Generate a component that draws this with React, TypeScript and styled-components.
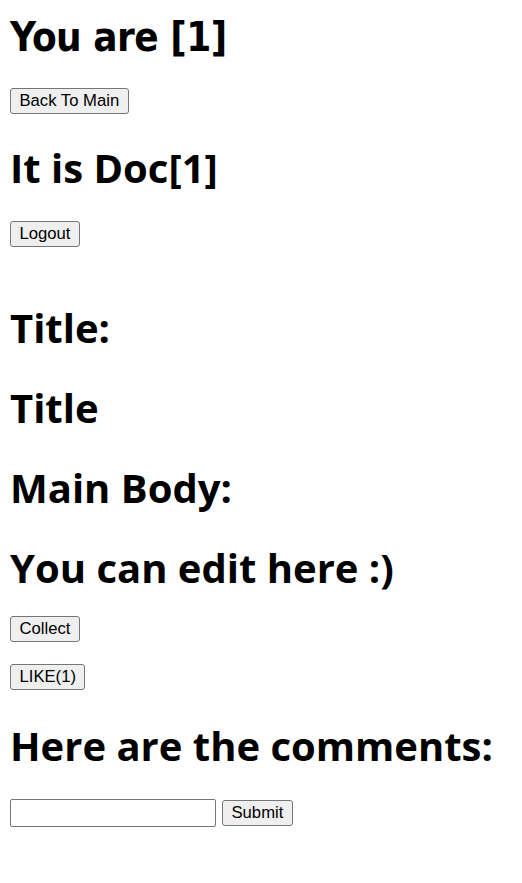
import React from "react";
import styled, { createGlobalStyle } from "styled-components";

const GlobalStyle = createGlobalStyle`
  html, body {
    margin: 0;
    padding: 0;
    background: #ffffff;
  }
  body {
    font-family: "Liberation Sans", Arial, sans-serif;
    color: #000000;
  }
`;

const Page = styled.main`
  display: flex;
  flex-direction: column;
  align-items: flex-start;
  padding: 10px 10px 40px 10px;
`;

const Heading = styled.h1<{ $gap?: number; $alt?: boolean }>`
  margin: ${(p) => p.$gap ?? 27}px 0 0 0;
  font-family: ${(p) =>
    p.$alt ? `"DejaVu Sans Condensed", "DejaVu Sans", sans-serif` : `"Open Sans", "Noto Sans", sans-serif`};
  letter-spacing: ${(p) => (p.$alt ? "-0.5px" : "0")};
  font-weight: 700;
  font-size: 40px;
  line-height: 53px;
  white-space: nowrap;
  color: #000000;
`;

const ButtonRow = styled.div<{ $gap?: number }>`
  display: flex;
  align-items: center;
  gap: 6px;
  margin-top: ${(p) => p.$gap ?? 27}px;
`;

const Button = styled.button`
  box-sizing: border-box;
  height: 26px;
  padding: 1px 8.5px 0 8.5px;
  font-family: "Liberation Sans", Arial, sans-serif;
  font-size: 16.67px;
  line-height: 1;
  color: #000000;
  background: #efefef;
  border: 1px solid #767676;
  border-radius: 3px;
  cursor: default;
`;

const CommentInput = styled.input`
  box-sizing: border-box;
  width: 206px;
  height: 28px;
  padding: 1px 3px;
  font-family: "Liberation Sans", Arial, sans-serif;
  font-size: 16.67px;
  background: #ffffff;
  border: 1px solid #767676;
  border-radius: 2px;
`;

export default function App() {
  return (
    <>
      <GlobalStyle />
      <Page>
        <Heading $alt $gap={1}>You are [1]</Heading>
        <ButtonRow $gap={24}>
          <Button>Back To Main</Button>
        </ButtonRow>
        <Heading $gap={27}>It is Doc[1]</Heading>
        <ButtonRow $gap={27}>
          <Button>Logout</Button>
        </ButtonRow>
        <Heading $gap={54}>Title:</Heading>
        <Heading>Title</Heading>
        <Heading>Main Body:</Heading>
        <Heading>You can edit here :)</Heading>
        <ButtonRow $gap={22}>
          <Button>Collect</Button>
        </ButtonRow>
        <ButtonRow $gap={22}>
          <Button>LIKE(1)</Button>
        </ButtonRow>
        <Heading $gap={29}>Here are the comments:</Heading>
        <ButtonRow $gap={27}>
          <CommentInput type="text" />
          <Button>Submit</Button>
        </ButtonRow>
      </Page>
    </>
  );
}
